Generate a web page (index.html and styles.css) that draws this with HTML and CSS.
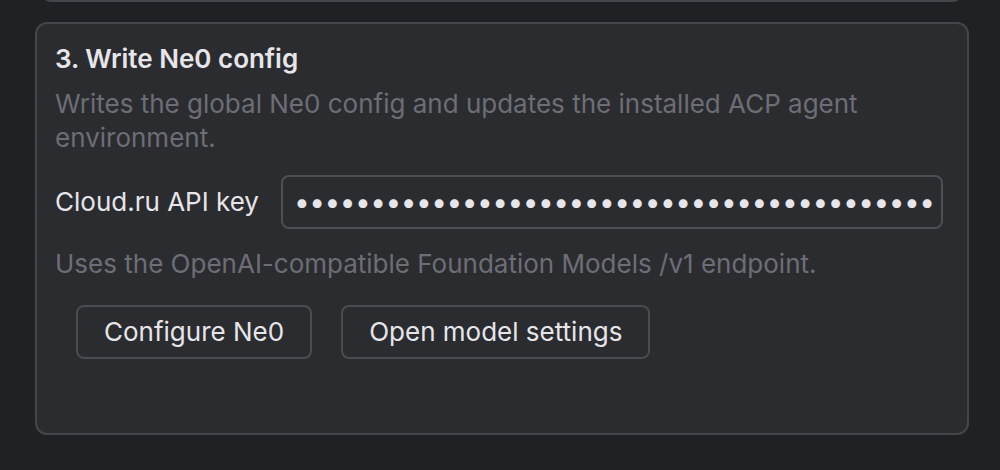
FILE: index.html
```html
<!DOCTYPE html>
<html lang="en">
<head>
<meta charset="utf-8">
<title>Write Ne0 config</title>
<link rel="stylesheet" href="styles.css">
</head>
<body>
<div class="page">
  <div class="prev-card"></div>
  <section class="card">
    <h3 class="card-title">3. Write Ne0 config</h3>
    <p class="card-desc">Writes the global Ne0 config and updates the installed ACP agent environment.</p>
    <div class="field-row">
      <label class="field-label" for="apikey">Cloud.ru API key</label>
      <input class="field-input" id="apikey" type="password" value="cloudruapikey0123456789abcdefghijklmnopqrstuvwx">
    </div>
    <p class="hint">Uses the OpenAI-compatible Foundation Models /v1 endpoint.</p>
    <div class="actions">
      <button class="btn" type="button">Configure Ne0</button>
      <button class="btn" type="button">Open model settings</button>
    </div>
  </section>
</div>
</body>
</html>
```
FILE: styles.css
```css
* { box-sizing: border-box; }
html, body {
  margin: 0;
  padding: 0;
  background: #202125;
}
body {
  font-family: Inter, "Noto Sans", "Liberation Sans", sans-serif;
  color: #e4e4e8;
  height: 470px;
  overflow: hidden;
}
.page {
  padding: 0 31px 0 35px;
}
.prev-card {
  height: 14px;
  margin: -12px 6px 0 6px;
  border: 2px solid #45464b;
  border-top: none;
  border-radius: 0 0 10px 10px;
  background: #2b2c30;
}
.card {
  margin-top: 20px;
  height: 413px;
  background: #2b2c30;
  border: 2px solid #45464b;
  border-radius: 12px;
  padding: 19px 24px 22px 18px;
}
.card-title {
  margin: 0;
  font-size: 26px;
  line-height: 32px;
  font-weight: 600;
  color: #e6e6ea;
}
.card-desc {
  margin: 12px 0 0 0;
  font-size: 26px;
  line-height: 34px;
  color: #6d6e75;
}
.field-row {
  margin-top: 20px;
  display: grid;
  grid-template-columns: auto 1fr;
  align-items: center;
  column-gap: 22px;
}
.field-label {
  font-size: 26px;
  line-height: 32px;
  color: #e6e6ea;
}
.field-input {
  height: 54px;
  width: 100%;
  min-width: 0;
  border: 2px solid #4d4e54;
  border-radius: 8px;
  background: #2b2c30;
  color: #e6e6ea;
  font-family: Inter, "Noto Sans", sans-serif;
  font-size: 28px;
  letter-spacing: -0.5px;
  padding: 0 6px 0 11px;
  outline: none;
}
.hint {
  margin: 18px 0 0 0;
  font-size: 26px;
  line-height: 34px;
  color: #6d6e75;
}
.actions {
  margin: 24px 0 0 21px;
  display: flex;
  gap: 29px;
}
.btn {
  height: 54px;
  padding: 0 26px;
  border: 2px solid #4b4c52;
  border-radius: 8px;
  background: #2b2c30;
  color: #e6e6ea;
  font-family: Inter, "Noto Sans", sans-serif;
  font-size: 26px;
  line-height: 32px;
}
```
